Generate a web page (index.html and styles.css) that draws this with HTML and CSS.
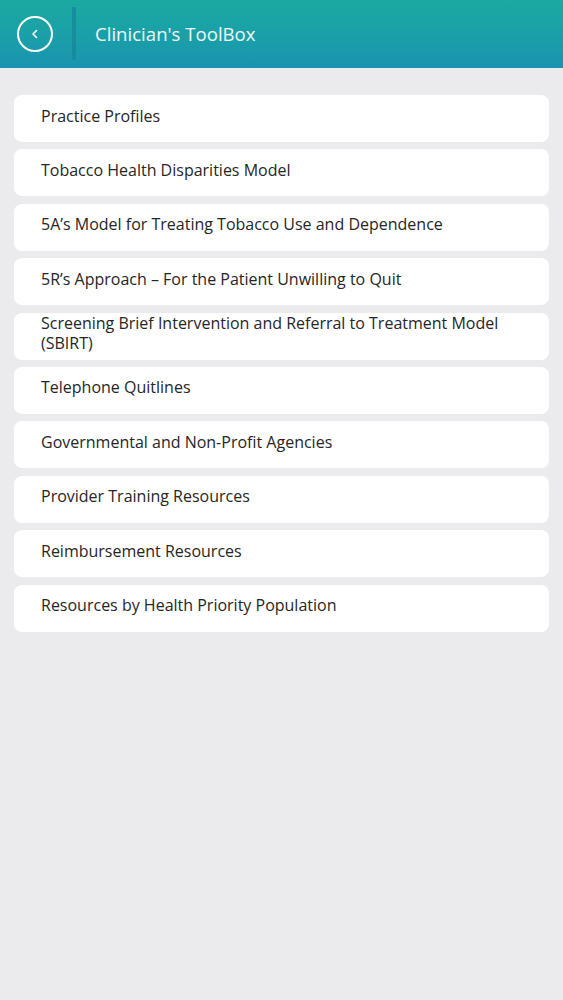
FILE: index.html
```html
<!DOCTYPE html>
<html>
<head>
<meta charset="utf-8">
<link rel="stylesheet" href="styles.css">
</head>
<body>
<header class="topbar">
  <div class="back-wrap">
    <span class="back-btn">
      <svg width="36" height="36" viewBox="0 0 36 36"><circle cx="18" cy="18" r="17" fill="none" stroke="#fff" stroke-width="2"/><path d="M19.5 14.5 L16 18 L19.5 21.5" fill="none" stroke="#fff" stroke-width="1.6" stroke-linecap="round" stroke-linejoin="round"/></svg>
    </span>
  </div>
  <div class="divider"></div>
  <h1 class="title">Clinician's ToolBox</h1>
</header>
<main class="list">
  <div class="card"><span>Practice Profiles</span></div>
  <div class="card"><span>Tobacco Health Disparities Model</span></div>
  <div class="card"><span>5A’s Model for Treating Tobacco Use and Dependence</span></div>
  <div class="card"><span>5R’s Approach – For the Patient Unwilling to Quit</span></div>
  <div class="card"><span>Screening Brief Intervention and Referral to Treatment Model (SBIRT)</span></div>
  <div class="card"><span>Telephone Quitlines</span></div>
  <div class="card"><span>Governmental and Non-Profit Agencies</span></div>
  <div class="card"><span>Provider Training Resources</span></div>
  <div class="card"><span>Reimbursement Resources</span></div>
  <div class="card"><span>Resources by Health Priority Population</span></div>
</main>
</body>
</html>
```
FILE: styles.css
```css
html, body {
  margin: 0;
  padding: 0;
}
body {
  background: #ebebed;
  font-family: "Open Sans", "Noto Sans", sans-serif;
  width: 563px;
  min-height: 1000px;
}
.topbar {
  height: 68px;
  display: flex;
  align-items: center;
  background: linear-gradient(180deg, #1ba9a1 0%, #1a9ea9 60%, #1a93b1 100%);
}
.back-wrap {
  width: 72px;
  display: flex;
  padding-left: 17px;
  box-sizing: border-box;
}
.back-btn {
  width: 36px;
  height: 36px;
  display: block;
}
.back-btn svg { display: block; }
.divider {
  width: 4px;
  height: 53px;
  background: #17889b;
  opacity: 0.8;
  align-self: flex-start;
  margin-top: 7px;
}
.title {
  margin: 0 0 0 19px;
  font-weight: 400;
  font-size: 18.6px;
  color: #eef9f9;
  padding-bottom: 2px;
}
.list {
  padding: 27px 14px 0 14px;
  display: flex;
  flex-direction: column;
  gap: 7.4px;
}
.card {
  height: 47px;
  box-sizing: border-box;
  background: #fff;
  border-radius: 8px;
  display: flex;
  align-items: center;
  padding: 0 20px 6px 27px;
  font-size: 16px;
  line-height: 20px;
  color: #262626;
}
```
